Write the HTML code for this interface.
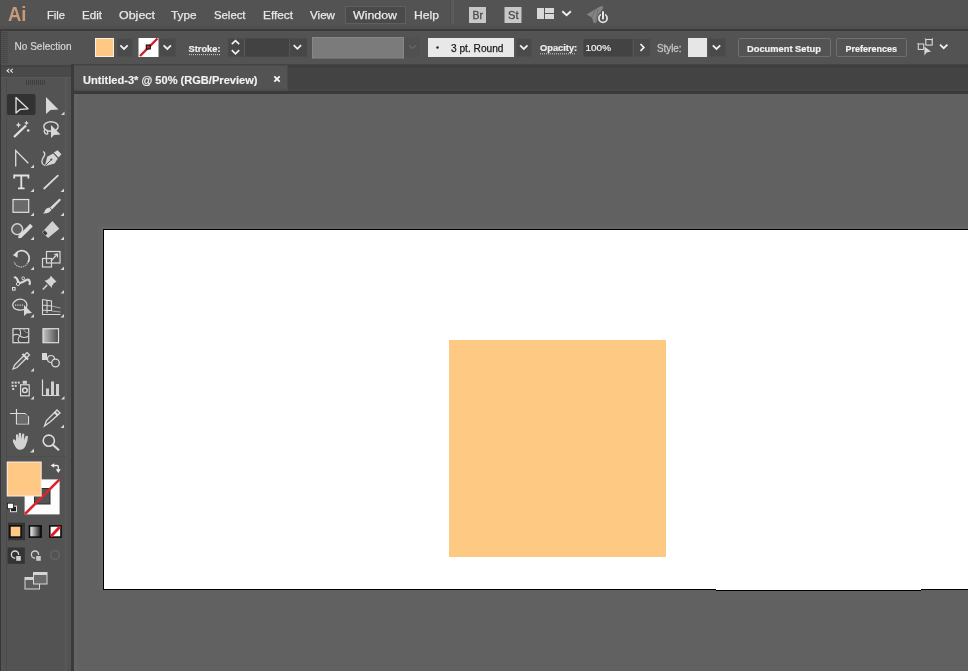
<!DOCTYPE html>
<html><head><meta charset="utf-8">
<style>
*{margin:0;padding:0}
html,body{width:968px;height:671px;overflow:hidden;background:#616161}
svg{position:absolute;left:0;top:0;display:block;will-change:transform}
text{font-family:"Liberation Sans",sans-serif}
</style></head><body>
<svg width="968" height="671" viewBox="0 0 968 671">
<!-- ===== canvas & artboard ===== -->
<rect x="0" y="0" width="968" height="671" fill="#616161"/>
<rect x="98" y="224" width="870" height="5" fill="#636363"/>
<rect x="98" y="224" width="5" height="366" fill="#636363"/>
<rect x="101" y="227" width="867" height="2" fill="#676767"/>
<rect x="101" y="227" width="2" height="363" fill="#676767"/>
<rect x="103" y="229" width="866" height="361" fill="#000"/>
<rect x="104" y="230" width="864" height="359" fill="#fff"/>
<rect x="716" y="589" width="205" height="1" fill="#fff"/>
<rect x="716" y="590" width="205" height="1" fill="#000"/>
<rect x="449" y="340" width="217" height="217" fill="#fec982"/>

<!-- ===== menu bar ===== -->
<rect x="0" y="0" width="968" height="29" fill="#535353"/>
<rect x="0" y="26" width="968" height="3" fill="#4f4f4f"/>
<rect x="0" y="29" width="968" height="2" fill="#3b3b3b"/>
<g id="menu">
  <text x="8" y="20.5" font-size="20" font-weight="bold" fill="#c99a78" textLength="18.5" lengthAdjust="spacingAndGlyphs">Ai</text>
  <g fill="#e8e8e8" font-size="11.5" stroke="#e8e8e8" stroke-width="0.25">
    <text x="47" y="18.5" textLength="18" lengthAdjust="spacingAndGlyphs">File</text>
    <text x="82" y="18.5" textLength="20" lengthAdjust="spacingAndGlyphs">Edit</text>
    <text x="119" y="18.5" textLength="36" lengthAdjust="spacingAndGlyphs">Object</text>
    <text x="171" y="18.5" textLength="25.5" lengthAdjust="spacingAndGlyphs">Type</text>
    <text x="214" y="18.5" textLength="31.5" lengthAdjust="spacingAndGlyphs">Select</text>
    <text x="263" y="18.5" textLength="30" lengthAdjust="spacingAndGlyphs">Effect</text>
    <text x="310" y="18.5" textLength="25" lengthAdjust="spacingAndGlyphs">View</text>
  </g>
  <rect x="345.5" y="6.5" width="60" height="17" fill="#4a4a4a" stroke="#5f5f5f" stroke-width="1"/>
  <g fill="#e8e8e8" font-size="11.5" stroke="#e8e8e8" stroke-width="0.25">
    <text x="353" y="18.5" textLength="44" lengthAdjust="spacingAndGlyphs">Window</text>
    <text x="414" y="18.5" textLength="25" lengthAdjust="spacingAndGlyphs">Help</text>
  </g>
  <rect x="451" y="0" width="3" height="24" fill="#5b5b5b"/>
  <rect x="450" y="0" width="1" height="24" fill="#4c4c4c"/>
  <!-- Br / St -->
  <rect x="469" y="7" width="17" height="16" fill="#c8c8c8"/>
  <text x="472.5" y="19.3" font-size="11" fill="#4a4a4a" stroke="#4a4a4a" stroke-width="0.3" textLength="10.5" lengthAdjust="spacingAndGlyphs">Br</text>
  <rect x="504.5" y="7" width="17" height="16" fill="#c8c8c8"/>
  <text x="508" y="19.3" font-size="11" fill="#4a4a4a" stroke="#4a4a4a" stroke-width="0.3" textLength="10.5" lengthAdjust="spacingAndGlyphs">St</text>
  <!-- workspace -->
  <rect x="537" y="8" width="7" height="11" fill="#d8d8d8"/>
  <rect x="545" y="8" width="9" height="5" fill="#d8d8d8"/>
  <rect x="545" y="14" width="9" height="5" fill="#d8d8d8"/>
  <path d="M562.3 11.3 L566.6 15.2 L570.9 11.3" fill="none" stroke="#f0f0f0" stroke-width="1.9"/>
  <!-- sync -->
  <path d="M586.5 14.5 L595 9.5 L601 6 L603.5 7 L601.5 11 L599 14 L597 21 L595.5 23.5 L593.5 22.5 L592 17.5 Z" fill="#838383"/>
  <path d="M592 17.5 L595 9.5 M595.5 23 L598 9" stroke="#6c6c6c" stroke-width="0.8" fill="none"/>
  <circle cx="603" cy="18.2" r="4.2" fill="none" stroke="#535353" stroke-width="3.2"/>
  <circle cx="603" cy="18.2" r="4.1" fill="none" stroke="#e0e0e0" stroke-width="1.8"/>
  <rect x="601" y="10.5" width="4" height="8.5" fill="#535353"/>
  <rect x="602" y="11.3" width="2" height="8" fill="#e6e6e6"/>
</g>

<!-- ===== control bar ===== -->
<rect x="0" y="31" width="968" height="33" fill="#535353"/>
<rect x="0" y="64" width="968" height="1" fill="#3d3d3d"/>
<g id="grip" fill="#474747"><rect x="0" y="31" width="1" height="33" fill="#3c3c3c"/><rect x="1" y="32" width="7" height="1"/><rect x="1" y="34" width="7" height="1"/><rect x="1" y="36" width="7" height="1"/><rect x="1" y="38" width="7" height="1"/><rect x="1" y="40" width="7" height="1"/><rect x="1" y="42" width="7" height="1"/><rect x="1" y="44" width="7" height="1"/><rect x="1" y="46" width="7" height="1"/><rect x="1" y="48" width="7" height="1"/><rect x="1" y="50" width="7" height="1"/><rect x="1" y="52" width="7" height="1"/><rect x="1" y="54" width="7" height="1"/><rect x="1" y="56" width="7" height="1"/><rect x="1" y="58" width="7" height="1"/><rect x="1" y="60" width="7" height="1"/><rect x="1" y="62" width="7" height="1"/></g>
<text x="14.5" y="50.3" font-size="10.2" fill="#d6d6d6" stroke="#d6d6d6" stroke-width="0.2" textLength="57" lengthAdjust="spacingAndGlyphs">No Selection</text>
<!-- fill swatch -->
<rect x="95" y="38" width="19" height="19" fill="#f5f0e6"/>
<rect x="96" y="39" width="17" height="17" fill="#ffc985"/>
<rect x="117.5" y="38.5" width="15" height="18" fill="#4a4a4a"/>
<path d="M120.3 45.4 L124 49 L127.7 45.4" fill="none" stroke="#f0f0f0" stroke-width="1.8"/>
<!-- stroke swatch -->
<rect x="138.5" y="38" width="20" height="19" fill="#fff"/>
<line x1="140" y1="56" x2="157.5" y2="38.5" stroke="#d0202c" stroke-width="2.4"/>
<rect x="146.3" y="45" width="4" height="4" fill="#d3202a" stroke="#111" stroke-width="1.1"/>
<rect x="159.5" y="38.5" width="16" height="18" fill="#4a4a4a"/>
<path d="M163.6 45.4 L167.3 49 L171 45.4" fill="none" stroke="#f0f0f0" stroke-width="1.8"/>
<!-- Stroke: -->
<text x="188.5" y="51.9" font-size="9.8" font-weight="bold" fill="#efefef" stroke="#efefef" stroke-width="0.2" textLength="32" lengthAdjust="spacingAndGlyphs">Stroke:</text>
<line x1="189" y1="54.6" x2="220" y2="54.6" stroke="#cfcfcf" stroke-width="1" stroke-dasharray="1 1"/>
<!-- stroke weight field -->
<rect x="228" y="38.5" width="79" height="18" fill="#474747"/>
<rect x="245" y="38.5" width="44" height="18" fill="#424242"/>
<rect x="244" y="38.5" width="1" height="18" fill="#5a5a5a"/>
<rect x="289" y="38.5" width="1" height="18" fill="#545454"/>
<path d="M231.8 44.2 L235.5 40.6 L239.2 44.2 M231.8 50.2 L235.5 53.8 L239.2 50.2" fill="none" stroke="#f0f0f0" stroke-width="1.7"/>
<path d="M293.7 45.2 L297.4 48.8 L301.1 45.2" fill="none" stroke="#f0f0f0" stroke-width="1.8"/>
<!-- gray disabled box -->
<rect x="312.5" y="37.5" width="91" height="20.5" fill="#7b7b7b" stroke="#878787" stroke-width="1"/>
<rect x="404" y="38" width="16" height="19" fill="#505050"/>
<path d="M409 45.5 L412.5 48.5 L416 45.5" fill="none" stroke="#676767" stroke-width="1.3"/>
<!-- 3 pt round -->
<rect x="428" y="38" width="86" height="19" fill="#e8e8e8"/>
<circle cx="437.5" cy="47.5" r="1.2" fill="#222"/>
<text x="451" y="51.9" font-size="10.3" fill="#1a1a1a" stroke="#1a1a1a" stroke-width="0.25" textLength="52.5" lengthAdjust="spacingAndGlyphs">3 pt. Round</text>
<rect x="516.5" y="38.5" width="15" height="18" fill="#4a4a4a"/>
<path d="M520.1 45.4 L523.8 49 L527.5 45.4" fill="none" stroke="#f0f0f0" stroke-width="1.8"/>
<!-- Opacity -->
<text x="540" y="51.2" font-size="9.8" font-weight="bold" fill="#efefef" stroke="#efefef" stroke-width="0.2" textLength="37.2" lengthAdjust="spacingAndGlyphs">Opacity:</text>
<line x1="540" y1="53.8" x2="576" y2="53.8" stroke="#cfcfcf" stroke-width="1" stroke-dasharray="1 1"/>
<rect x="583.5" y="39" width="49" height="17.5" fill="#434343"/>
<text x="585.5" y="51.2" font-size="9.8" fill="#f4f4f4" stroke="#f4f4f4" stroke-width="0.2" textLength="25.5" lengthAdjust="spacingAndGlyphs">100%</text>
<rect x="634" y="39" width="16" height="17.5" fill="#4a4a4a"/>
<path d="M640.5 44 L643.8 47.5 L640.5 51" fill="none" stroke="#f0f0f0" stroke-width="1.8"/>
<!-- Style -->
<text x="657" y="51.9" font-size="10.2" fill="#c4c4c4" stroke="#c4c4c4" stroke-width="0.3" textLength="24.5" lengthAdjust="spacingAndGlyphs">Style:</text>
<rect x="688" y="38" width="19" height="19" fill="#e6e6e6"/>
<rect x="708.5" y="38.5" width="17" height="18" fill="#4a4a4a"/>
<path d="M712.8 45.4 L716.5 49 L720.2 45.4" fill="none" stroke="#f0f0f0" stroke-width="1.8"/>
<!-- buttons -->
<rect x="738.5" y="38.5" width="92" height="18" rx="1.5" fill="#535353" stroke="#6f6f6f" stroke-width="1"/>
<text x="747" y="51.8" font-size="9.8" font-weight="bold" fill="#f2f2f2" stroke="#f2f2f2" stroke-width="0.2" textLength="74" lengthAdjust="spacingAndGlyphs">Document Setup</text>
<rect x="836.5" y="38.5" width="70" height="18" rx="1.5" fill="#535353" stroke="#6f6f6f" stroke-width="1"/>
<text x="845.5" y="51.8" font-size="9.8" font-weight="bold" fill="#f2f2f2" stroke="#f2f2f2" stroke-width="0.2" textLength="51.5" lengthAdjust="spacingAndGlyphs">Preferences</text>
<!-- arrange icon -->
<rect x="918.3" y="44" width="5.4" height="5.4" fill="none" stroke="#d4d4d4" stroke-width="1.1"/>
<rect x="925.8" y="39.5" width="6.4" height="5.6" fill="none" stroke="#dcdcdc" stroke-width="1.1"/>
<path d="M925 38.3 L926.6 39.9 M933 38.3 L931.4 39.9 M917.3 43 L918.8 44.5" stroke="#cfcfcf" stroke-width="1"/>
<path d="M924.4 46.4 L924.4 55.5 L926.6 52.6 L931 51.6 Z" fill="#d8d8d8"/>
<path d="M940 44.7 L943.7 48.2 L947.4 44.7" fill="none" stroke="#f0f0f0" stroke-width="1.8"/>

<!-- ===== tab bar ===== -->
<rect x="71" y="64" width="897" height="30" fill="#434343"/>
<rect x="71" y="65" width="897" height="3" fill="#3f3f3f"/>
<rect x="288" y="89" width="680" height="1" fill="#474747"/>
<rect x="71" y="91" width="897" height="3" fill="#3a3a3a"/>
<rect x="74" y="65" width="213.5" height="26" fill="#535353"/>
<rect x="74" y="89" width="213.5" height="2" fill="#4e4e4e"/>
<rect x="74" y="65" width="213.5" height="1" fill="#4a4a4a"/>
<text x="83" y="84.4" font-size="11.5" font-weight="bold" fill="#f2f2f2" stroke="#f2f2f2" stroke-width="0.15" textLength="174.5" lengthAdjust="spacingAndGlyphs">Untitled-3* @ 50% (RGB/Preview)</text>
<path d="M274.3 76.3 L279.7 81.7 M279.7 76.3 L274.3 81.7" stroke="#f5f5f5" stroke-width="1.9"/>

<!-- ===== tools panel ===== -->
<rect x="0" y="64" width="71" height="607" fill="#535353"/>
<rect x="0" y="64" width="1" height="607" fill="#333"/>
<rect x="6" y="77" width="1" height="594" fill="#4b4b4b"/>
<rect x="65" y="77" width="2" height="594" fill="#585858"/>
<rect x="71" y="64" width="3" height="607" fill="#3b3b3b"/>
<rect x="74" y="94" width="3" height="577" fill="#646464"/>
<rect x="0" y="65" width="71" height="12" fill="#494949"/>
<rect x="0" y="65" width="71" height="2" fill="#434343"/>
<rect x="0" y="77" width="71" height="1" fill="#585858"/>
<rect x="0" y="64" width="1" height="607" fill="#363636"/>
<path d="M9.3 68.3 L6.2 70.8 L9.3 73.3 L9.3 72 L7.9 70.8 L9.3 69.6 Z M12.8 68.3 L9.7 70.8 L12.8 73.3 L12.8 72 L11.4 70.8 L12.8 69.6 Z" fill="#e8e8e8"/>
<g fill="#3e3e3e">
  <rect x="26" y="80" width="1" height="5"/><rect x="28" y="80" width="1" height="5"/><rect x="30" y="80" width="1" height="5"/>
  <rect x="32" y="80" width="1" height="5"/><rect x="34" y="80" width="1" height="5"/><rect x="36" y="80" width="1" height="5"/>
  <rect x="38" y="80" width="1" height="5"/><rect x="40" y="80" width="1" height="5"/><rect x="42" y="80" width="1" height="5"/>
  <rect x="44" y="80" width="1" height="5"/>
</g>

<!-- ===== tools ===== -->
<g id="tools">
<rect x="7" y="94" width="28.5" height="21" rx="2" fill="#323232"/>
<path d="M16 97.5 L16 113 L20.3 109.3 L28 108.8 Z" fill="none" stroke="#e4e4e4" stroke-width="1.3" stroke-linejoin="round"/>
<path d="M46 97 L46 114 L50.5 110 L58.5 109.6 Z" fill="#d8d8d8"/>
<g fill="#d6d6d6">
<path d="M61 115 L64.5 115 L64.5 111.5 Z"/>
<path d="M30.5 168 L34 168 L34 164.5 Z"/><path d="M30.5 192 L34 192 L34 188.5 Z"/><path d="M60.5 192 L64 192 L64 188.5 Z"/>
<path d="M30.5 216 L34 216 L34 212.5 Z"/><path d="M60.5 216 L64 216 L64 212.5 Z"/>
<path d="M30.5 240 L34 240 L34 236.5 Z"/><path d="M60.5 240 L64 240 L64 236.5 Z"/>
<path d="M30.5 270 L34 270 L34 266.5 Z"/><path d="M60.5 270 L64 270 L64 266.5 Z"/>
<path d="M30.5 293.5 L34 293.5 L34 290 Z"/><path d="M60.5 293.5 L64 293.5 L64 290 Z"/>
<path d="M30.5 317.5 L34 317.5 L34 314 Z"/><path d="M60.5 317.5 L64 317.5 L64 314 Z"/>
<path d="M30.5 371.5 L34 371.5 L34 368 Z"/>
<path d="M30.5 399.5 L34 399.5 L34 396 Z"/><path d="M61 399.5 L64.5 399.5 L64.5 396 Z"/>
<path d="M60.5 428 L64 428 L64 424.5 Z"/>
<path d="M30 452.5 L34 452.5 L34 448.5 Z"/>
</g>
<!-- magic wand -->
<line x1="14" y1="137" x2="26" y2="125.5" stroke="#e0e0e0" stroke-width="2.4"/>
<g fill="#e0e0e0">
<path d="M18.5 122 L19.3 124.2 L21.5 125 L19.3 125.8 L18.5 128 L17.7 125.8 L15.5 125 L17.7 124.2 Z"/>
<path d="M26.5 120.5 L27.2 122.3 L29 123 L27.2 123.7 L26.5 125.5 L25.8 123.7 L24 123 L25.8 122.3 Z"/>
<circle cx="28.2" cy="130.5" r="1.3"/>
</g>
<!-- lasso -->
<ellipse cx="51" cy="126.5" rx="7.2" ry="4.8" fill="none" stroke="#d8d8d8" stroke-width="1.4"/>
<path d="M45 129 Q43 132 46 134 Q49 135 47 131" fill="none" stroke="#d8d8d8" stroke-width="1.3"/>
<path d="M51 125 L51 138 L54 135 L60.5 134.5 Z" fill="#d8d8d8"/>
<!-- curvature -->
<path d="M15.7 166.5 L15.7 150.5 L28.3 163.2" fill="none" stroke="#dcdcdc" stroke-width="1.3"/>
<!-- pen -->
<path d="M53.8 152.6 L57.6 150.2 L61.4 154.2 L58.6 157.6 Z" fill="#d8d8d8"/>
<path d="M47.2 156.8 L53.2 153.6 L57.8 158.4 L54.6 163.6 L44.8 166.2 Z" fill="#d4d4d4"/>
<path d="M45.2 165.8 L50.8 160.2" stroke="#555" stroke-width="1"/>
<circle cx="51.3" cy="159.6" r="1.1" fill="#555"/>
<path d="M43 151.5 Q45.5 152.5 44.5 155.5 Q42 159 41.8 161.5 Q42 164.5 45 165.5" fill="none" stroke="#d6d6d6" stroke-width="1.3"/>
<!-- type -->
<path d="M14.2 178.5 L14.2 175.5 L28.4 175.5 L28.4 178.5 M21.3 175.5 L21.3 188.3 M18 188.3 L24.6 188.3" fill="none" stroke="#e2e2e2" stroke-width="1.8"/>
<!-- line -->
<line x1="44.2" y1="188.5" x2="57.8" y2="175.6" stroke="#dadada" stroke-width="1.8" stroke-linecap="round"/>
<!-- rect -->
<rect x="13" y="199.5" width="15.7" height="12.8" fill="#6a6a6a" stroke="#e0e0e0" stroke-width="1.2"/>
<!-- paintbrush -->
<path d="M59.5 198.5 L61 200 L52 209.5 L50 207.5 Z" fill="#dadada"/>
<path d="M49.5 207.5 Q45 208 44.5 212 L43 213.5 Q48.5 214 51.5 210 Z" fill="#dadada"/>
<!-- shaper -->
<circle cx="17.2" cy="229.2" r="5.4" fill="#5e5e5e" stroke="#d8d8d8" stroke-width="1.4"/>
<path d="M30.2 223.8 L32.8 226.4 L21.2 238 L18.2 238.2 L18.6 235.4 Z" fill="#dcdcdc"/>
<!-- eraser -->
<path d="M52.4 221 L59.3 228.8 L48.1 238.1 L42.1 232.2 Z" fill="#d2d2d2"/>
<path d="M44.5 230.2 L47.5 233.2 L45.6 235.5 L42.6 232.6 Z" fill="#3a3a3a"/>
<!-- rotate -->
<path d="M15.5 253.8 A7.2 7.2 0 0 1 27.8 262.5" fill="none" stroke="#dcdcdc" stroke-width="1.7"/>
<path d="M27.5 263 A7.2 7.2 0 0 1 14.2 262" fill="none" stroke="#b4b4b4" stroke-width="1.3" stroke-dasharray="1.5 0.8"/>
<path d="M12.8 255 L17.8 252 L17.5 257.8 Z" fill="#e0e0e0"/>
<!-- scale -->
<rect x="42.5" y="258.5" width="9" height="8.5" fill="none" stroke="#d8d8d8" stroke-width="1.2"/>
<rect x="46.5" y="251.5" width="13.5" height="11.5" fill="none" stroke="#d8d8d8" stroke-width="1.2"/>
<path d="M51 261 L57 254.5 M54 254.5 L57.5 254 L57.5 257.5" fill="none" stroke="#d8d8d8" stroke-width="1.2"/>
<!-- width tool -->
<path d="M14.2 278 Q15.5 276.5 17 279 Q18.5 283 20 283 Q22 282.5 24.5 281 Q27.5 279 29 280 Q30.5 282 29.5 285" fill="none" stroke="#d8d8d8" stroke-width="2.2"/>
<circle cx="18" cy="284" r="1.6" fill="#535353" stroke="#d8d8d8" stroke-width="1"/>
<circle cx="23.2" cy="278.3" r="1.4" fill="none" stroke="#d8d8d8" stroke-width="1"/>
<rect x="12.5" y="287.5" width="2.6" height="2.6" fill="none" stroke="#e0e0e0" stroke-width="1"/>
<!-- puppet pin -->
<path d="M50.8 275.8 L56.5 281.8 L54 283 L51.8 286.2 L52 288 L44.5 280.5 L46.5 280.3 L49.5 278.2 Z" fill="#d4d4d4"/>
<line x1="42.8" y1="289.5" x2="47.2" y2="285" stroke="#d4d4d4" stroke-width="1.6"/>
<!-- shape builder -->
<path d="M14 302 Q18 297.5 24 300 Q28 303 26.5 307 Q25 310.5 19 310 Q13 309.5 12.8 305 Q12.8 303 14 302 Z" fill="none" stroke="#d8d8d8" stroke-width="1.3"/>
<g fill="#d8d8d8"><rect x="15" y="304.5" width="1.2" height="1.2"/><rect x="17.3" y="304.5" width="1.2" height="1.2"/><rect x="19.6" y="304.5" width="1.2" height="1.2"/><rect x="21.9" y="304.5" width="1.2" height="1.2"/></g>
<path d="M24 305 L24 316 L26.8 313.5 L32 313 Z" fill="#d8d8d8"/>
<!-- perspective grid -->
<path d="M42.5 299.5 L42.5 314.5 L60.5 314.5 M42.5 299.5 L51.5 301 L51.5 311 M47 300.2 L47 313 M42.5 305 L51.5 306 M42.5 310 L51.5 310.5" fill="none" stroke="#d8d8d8" stroke-width="1.1"/>
<path d="M51.5 306 L60.5 308 M51.5 311 L60.5 312" fill="none" stroke="#bbb" stroke-width="0.8"/>
<!-- mesh -->
<rect x="13" y="328.7" width="15.7" height="14" fill="#4a4a4a" stroke="#dcdcdc" stroke-width="1.2"/>
<path d="M19.5 328.7 Q22 334 19 337 Q17 340 19.5 342.7 M13 335.5 Q17 333 20 336 Q24 339 28.7 336" fill="none" stroke="#cfcfcf" stroke-width="1.1"/>
<path d="M24 328.7 Q23 332 28.7 333" fill="none" stroke="#aaa" stroke-width="0.9"/>
<!-- gradient -->
<defs><linearGradient id="gr" x1="0" x2="1" y1="0" y2="0"><stop offset="0" stop-color="#c4c4c4"/><stop offset="1" stop-color="#4a4a4a"/></linearGradient>
<linearGradient id="gr2" x1="0" x2="1" y1="0" y2="0"><stop offset="0" stop-color="#fff"/><stop offset="1" stop-color="#111"/></linearGradient></defs>
<rect x="43" y="328.7" width="15.5" height="14" fill="url(#gr)" stroke="#dcdcdc" stroke-width="1.2"/>
<!-- eyedropper -->
<path d="M27 352.5 L29.5 355 L26 358.5 L17 367.5 L13 369 L14.5 365 L23.5 356 Z" fill="#5a5a5a" stroke="#dcdcdc" stroke-width="1.2"/>
<path d="M22.5 354 L28 359.5" stroke="#dcdcdc" stroke-width="2"/>
<!-- blend -->
<rect x="42" y="353" width="5" height="7" fill="#d8d8d8"/>
<circle cx="51" cy="359" r="3.5" fill="#5a5a5a" stroke="#d8d8d8" stroke-width="1.2"/>
<circle cx="55.5" cy="363" r="3.8" fill="#535353" stroke="#d8d8d8" stroke-width="1.3"/>
<!-- symbol sprayer -->
<g fill="#d4d4d4"><rect x="11.6" y="381.6" width="2" height="2"/><rect x="14.7" y="381.6" width="2" height="2"/><rect x="17.8" y="381.6" width="2" height="2"/>
<rect x="11.6" y="384.9" width="2" height="2"/><rect x="14.7" y="384.9" width="2" height="2"/>
<rect x="12.2" y="388" width="2" height="2"/></g>
<rect x="22.7" y="380.8" width="4.2" height="3" fill="#d4d4d4"/>
<rect x="20.6" y="384.8" width="8.6" height="11" fill="#4c4c4c" stroke="#dcdcdc" stroke-width="1.2"/>
<circle cx="24.9" cy="390.3" r="2.3" fill="none" stroke="#dcdcdc" stroke-width="1.5"/>
<!-- column graph -->
<path d="M42.5 379.5 L42.5 395.5 L59.5 395.5" fill="none" stroke="#dcdcdc" stroke-width="1.2"/>
<rect x="46" y="388.5" width="3" height="7" fill="#cfcfcf"/>
<rect x="51" y="381.5" width="3" height="14" fill="#cfcfcf"/>
<rect x="56" y="384" width="3" height="11.5" fill="#cfcfcf"/>
<!-- artboard tool -->
<path d="M16.5 409 L16.5 424 L28.5 424 L28.5 417 L25 413.5 L16.5 413.5 M10 413.5 L16.5 413.5" fill="none" stroke="#dcdcdc" stroke-width="1.2"/>
<rect x="17.5" y="414.5" width="10.2" height="9" fill="#6a6a6a"/>
<!-- slice -->
<path d="M57 410 L60 413 L50 422 L44.5 426 L46.5 420.5 Z" fill="none" stroke="#dcdcdc" stroke-width="1.3"/>
<path d="M54.5 412 L58 415.5" stroke="#dcdcdc" stroke-width="2.2"/>
<!-- hand -->
<path d="M15 446 Q12 441 13.2 439.5 Q14.5 438.5 16 441 L16 434.8 Q16.8 433.5 18 434.8 L18.3 439 L18.8 433.3 Q20 432 21 433.3 L21.2 439 L22.2 434 Q23.3 433 24.3 434.2 L24 440 L25.8 436 Q27 435.2 28 436.3 Q28 441 25.5 446 Q24 449.5 20 449.8 Q16.5 449.5 15 446 Z" fill="#d2d2d2"/>
<!-- zoom -->
<circle cx="48.8" cy="440.7" r="5.6" fill="none" stroke="#dcdcdc" stroke-width="1.6"/>
<line x1="52.8" y1="444.7" x2="59" y2="450.2" stroke="#dcdcdc" stroke-width="2.2"/>
<rect x="6" y="456" width="60" height="1" fill="#4e4e4e"/>
<!-- fill / stroke -->
<rect x="24.6" y="479.4" width="35" height="35" fill="#fdfdfd"/>
<rect x="34.5" y="488.5" width="15.5" height="15.5" fill="#535353" stroke="#2e2e2e" stroke-width="1"/>
<line x1="25" y1="514" x2="59.6" y2="479.4" stroke="#d7262c" stroke-width="2.6"/>
<rect x="6.7" y="461.5" width="35" height="35" fill="#f7efe2"/>
<rect x="7.7" y="462.5" width="33" height="33" fill="#ffc985"/>
<path d="M53.5 465.5 L57.2 465.5 Q58.3 465.5 58.3 466.6 L58.3 470" fill="none" stroke="#e6e6e6" stroke-width="1.3"/>
<path d="M50.6 465.5 L54.2 463.2 L54.2 467.8 Z" fill="#ececec"/>
<path d="M55.8 469.2 L60.8 469.2 L58.3 473 Z" fill="#ececec"/>

<rect x="10.5" y="506.2" width="6" height="5.5" fill="#1c1c1c" stroke="#e0e0e0" stroke-width="1"/>
<rect x="7.5" y="503.2" width="6" height="5.5" fill="#fafafa" stroke="#1c1c1c" stroke-width="0.8"/>
<!-- color modes -->
<rect x="8" y="522.7" width="17" height="17.5" fill="#343434"/>
<rect x="9.9" y="525.9" width="11.2" height="11.2" fill="#ffc985" stroke="#0d0d0d" stroke-width="1.6"/>
<rect x="29.5" y="525.9" width="11.6" height="11.2" fill="url(#gr2)" stroke="#0d0d0d" stroke-width="1.6"/>
<rect x="49.8" y="525.9" width="11.2" height="11.2" fill="#fff" stroke="#0d0d0d" stroke-width="1.6"/>
<line x1="50.8" y1="536.5" x2="60.2" y2="526.5" stroke="#e01b24" stroke-width="2.8"/>
<!-- draw modes -->
<rect x="7.6" y="547.5" width="17.2" height="16.3" fill="#343434"/>
<circle cx="15" cy="554.6" r="3.6" fill="none" stroke="#d8d8d8" stroke-width="1.3"/>
<rect x="15.2" y="555" width="5.6" height="5.8" fill="#343434"/>
<rect x="16.2" y="556" width="4.6" height="4.8" fill="#d0d0d0"/>
<circle cx="35" cy="554.6" r="3.6" fill="none" stroke="#cfcfcf" stroke-width="1.3"/>
<rect x="35.2" y="555" width="5.6" height="5.8" fill="#535353"/>
<rect x="36.2" y="556" width="4.6" height="4.8" fill="#c8c8c8"/>
<circle cx="55" cy="555" r="4.3" fill="none" stroke="#626262" stroke-width="1.8"/>
<!-- screen mode -->
<rect x="25" y="577.5" width="14.5" height="11.5" fill="#5c5c5c" stroke="#d8d8d8" stroke-width="1"/>
<rect x="25" y="577.5" width="14.5" height="2.5" fill="#cfcfcf"/>
<rect x="33.5" y="572.5" width="13.5" height="11.5" fill="#6a6a6a" stroke="#d8d8d8" stroke-width="1"/>
<rect x="33.5" y="572.5" width="13.5" height="2.5" fill="#d4d4d4"/>
</g>
</svg>
</body></html>
